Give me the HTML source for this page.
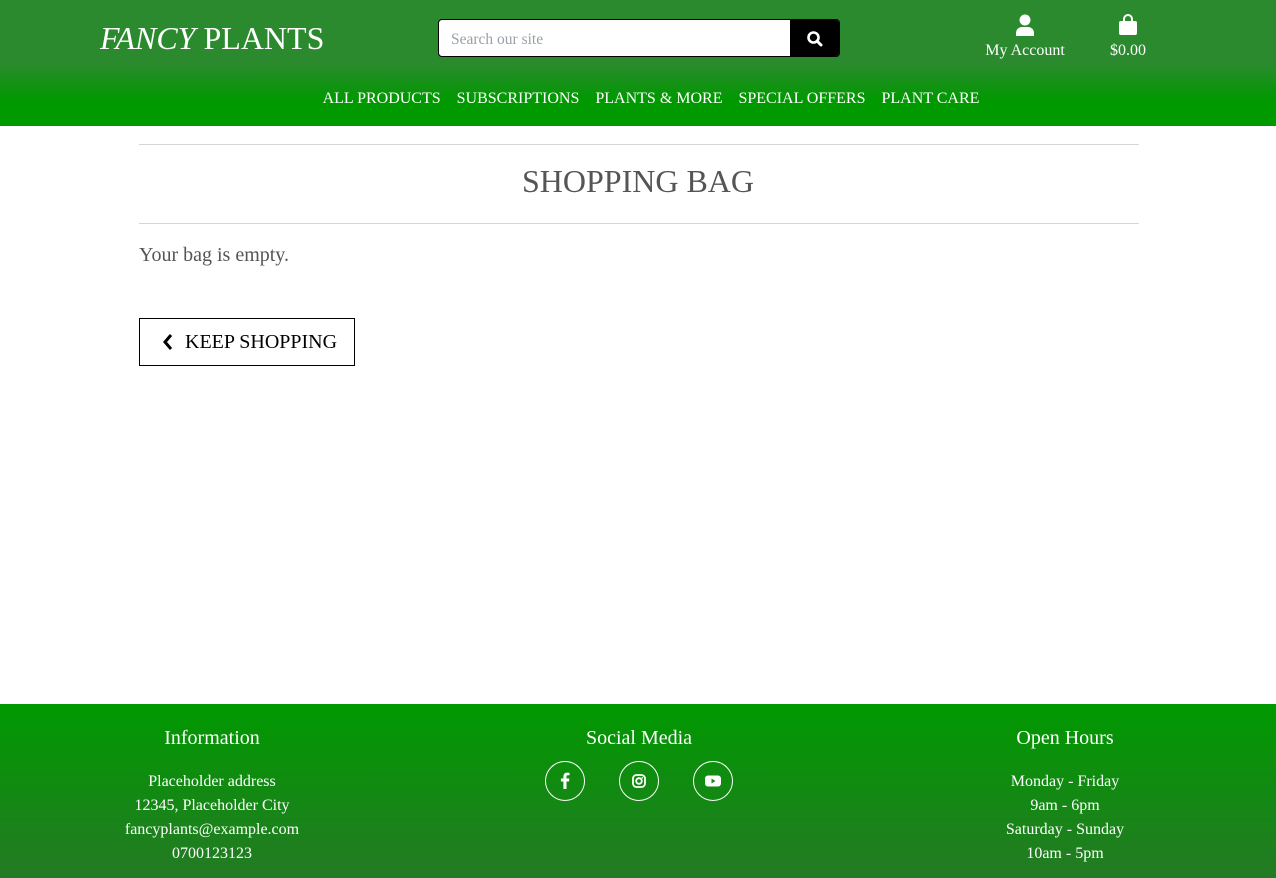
<!DOCTYPE html>
<html><head><style>
*{margin:0;padding:0;box-sizing:border-box}
body{width:1276px;height:878px;position:relative;font-family:"Liberation Serif",serif;background:#fff;overflow:hidden}
header{position:absolute;left:0;top:0;width:1276px;height:126px;background:linear-gradient(#2b8a2e 0%,#2b8a2e 50%,#009900 80%,#009900 100%)}
.logo{position:absolute;left:100px;top:20px;color:#fff;font-size:32px}
.search{position:absolute;left:438px;top:19px;width:402px;height:38px;border:1px solid #000;border-radius:4px;background:#fff;overflow:hidden}
.search span{position:absolute;left:12px;top:11px;font-size:15.5px;color:#9aa0a6}
.search .btn{position:absolute;right:0;top:0;width:49px;height:38px;background:#000}
.ic{position:absolute;color:#fff;font-size:16px;text-align:center}
nav{position:absolute;top:90px;left:13px;width:1276px;text-align:center;color:#fff;font-size:16px}
nav span{margin:0 6px}
hr{position:absolute;left:139px;width:1000px;border:0;border-top:1px solid #d6d6d6}
h1{position:absolute;top:163px;width:1276px;text-align:center;font-weight:normal;font-size:32px;color:#555}
.empty{position:absolute;left:139px;top:244px;font-size:20px;color:#555}
.keep{position:absolute;left:139px;top:318px;width:216px;height:48px;border:1px solid #000;font-size:20px;color:#000}
footer{position:absolute;left:0;top:704px;width:1276px;height:174px;background:linear-gradient(#009900,#247a24)}
.col{position:absolute;top:23px;width:300px;text-align:center;color:#fff}
.col h3{font-weight:normal;font-size:20px;margin-bottom:20px}
.col p{font-size:16px;line-height:24px}
.circ{position:absolute;top:761px;width:40px;height:40px;border:1px solid #fff;border-radius:50%}
</style></head><body>
<header>
<div class="logo"><i>FANCY</i> PLANTS</div>
<div class="search"><span>Search our site</span><div class="btn"><svg width="49" height="38" viewBox="0 0 49 38"><circle cx="23.5" cy="17.5" r="5" fill="none" stroke="#fff" stroke-width="2.6"/><line x1="27" y1="21" x2="31" y2="25" stroke="#fff" stroke-width="3" stroke-linecap="round"/></svg></div></div>
<div class="ic" style="left:980px;top:14px;width:90px"><svg width="20" height="22" viewBox="0 0 20 22"><circle cx="10" cy="6" r="5.5" fill="#fff"/><path d="M1 22v-3a6 6 0 0 1 6-6h6a6 6 0 0 1 6 6v3z" fill="#fff"/></svg><div style="margin-top:1px">My Account</div></div>
<div class="ic" style="left:1100px;top:14px;width:56px"><svg width="20" height="22" viewBox="0 0 20 22"><path d="M6 7V5a4 4 0 0 1 8 0v2" fill="none" stroke="#fff" stroke-width="2"/><rect x="1" y="7" width="18" height="14" rx="2" fill="#fff"/></svg><div style="margin-top:1px">$0.00</div></div>
<nav><span>ALL PRODUCTS</span> <span>SUBSCRIPTIONS</span> <span>PLANTS &amp; MORE</span> <span>SPECIAL OFFERS</span> <span>PLANT CARE</span></nav>
</header>
<hr style="top:144px"><h1>SHOPPING BAG</h1><hr style="top:223px">
<div class="empty">Your bag is empty.</div>
<div class="keep"><svg style="position:absolute;left:22px;top:14px" width="12" height="18" viewBox="0 0 12 18"><path d="M9 2L3 9l6 7" fill="none" stroke="#000" stroke-width="3"/></svg><span style="position:absolute;left:45px;top:12px">KEEP SHOPPING</span></div>
<footer>
<div class="col" style="left:62px"><h3>Information</h3><p>Placeholder address<br>12345, Placeholder City<br>fancyplants@example.com<br>0700123123</p></div>
<div class="col" style="left:489px"><h3>Social Media</h3></div>
<div class="col" style="left:915px"><h3>Open Hours</h3><p>Monday - Friday<br>9am - 6pm<br>Saturday - Sunday<br>10am - 5pm</p></div>
</footer>
<div class="circ" style="left:545px"><svg width="38" height="38" viewBox="0 0 38 38"><path d="M20.5 27v-7.5h2.5l.4-3h-2.9v-1.8c0-.8.3-1.4 1.4-1.4h1.6v-2.6a18 18 0 0 0-2.3-.1c-2.3 0-3.8 1.4-3.8 3.9v2h-2.5v3h2.5V27z" fill="#fff"/></svg></div>
<div class="circ" style="left:619px"><svg width="38" height="38" viewBox="0 0 38 38"><rect x="13" y="13" width="12" height="12" rx="3.5" fill="none" stroke="#fff" stroke-width="1.8"/><circle cx="19" cy="19" r="2.8" fill="none" stroke="#fff" stroke-width="1.8"/><circle cx="22.3" cy="15.7" r=".8" fill="#fff"/></svg></div>
<div class="circ" style="left:693px"><svg width="38" height="38" viewBox="0 0 38 38"><rect x="11" y="13.5" width="16" height="11" rx="3" fill="#fff"/><path d="M17.5 16.5v5l4-2.5z" fill="#1a8a1a"/></svg></div>
</body></html>
